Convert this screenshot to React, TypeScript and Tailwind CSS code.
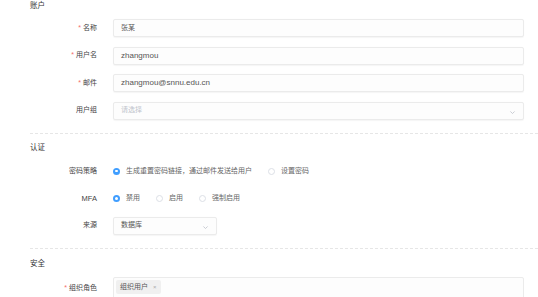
import React from 'react';

const Chevron = () => (
  <svg width="7" height="7" viewBox="0 0 10 10" className="mt-[3px]">
    <path d="M2 3.5 L5 6.5 L8 3.5" fill="none" stroke="#c0c4cc" strokeWidth="1.2" />
  </svg>
);

const Label: React.FC<{ text: React.ReactNode; required?: boolean }> = ({ text, required }) => (
  <div className="w-[97px] shrink-0 text-right text-[#444]">
    {required && <span className="text-[#f56c6c] mr-[2px]">*</span>}
    {text}
  </div>
);

const Heading: React.FC<{ text: string; className?: string }> = ({ text, className }) => (
  <div className={`pl-[30px] h-[11px] leading-[11px] text-[7.5px] text-[#333] ${className || ''}`}>{text}</div>
);

const Divider: React.FC<{ className?: string }> = ({ className }) => (
  <div className={`ml-[30px] border-t border-dashed border-[#e6e6e6] ${className || ''}`} />
);

const Radio: React.FC<{ label: string; checked?: boolean }> = ({ label, checked }) => (
  <div className="flex items-center gap-[6px]">
    {checked ? (
      <span className="w-[7px] h-[7px] rounded-full bg-[#409eff] flex items-center justify-center">
        <span className="w-[2.5px] h-[2.5px] rounded-full bg-white" />
      </span>
    ) : (
      <span className="w-[7px] h-[7px] rounded-full border border-[#dcdfe6] bg-white" />
    )}
    <span className="text-[#666]">{label}</span>
  </div>
);

const InputRow: React.FC<{ label: React.ReactNode; required?: boolean; children: React.ReactNode; className?: string }> = ({
  label,
  required,
  children,
  className,
}) => (
  <div className={`flex items-center h-[18px] ${className || ''}`}>
    <Label text={label} required={required} />
    <div className="ml-[16px] mr-[14px] flex-1 flex items-center">{children}</div>
  </div>
);

const boxCls =
  'h-[18px] border border-[#ebebeb] bg-[#fdfdfd] rounded-[2px] flex items-center px-[7px] text-[#555] shadow-[0_0.5px_1px_rgba(0,0,0,0.04)]';

export default function App() {
  return (
    <div className="w-[538px] h-[297px] overflow-hidden bg-white text-[7px] font-['Liberation_Sans','Noto_Sans_CJK_SC',sans-serif]">
      <Heading text="账户" />

      <div className="mt-[8px] flex flex-col gap-[9.5px]">
        <InputRow label="名称" required>
          <div className={`${boxCls} w-full`}>张某</div>
        </InputRow>
        <InputRow label="用户名" required>
          <div className={`${boxCls} w-full text-[8px]`}>zhangmou</div>
        </InputRow>
        <InputRow label="邮件" required>
          <div className={`${boxCls} w-full text-[8px]`}>zhangmou@snnu.edu.cn</div>
        </InputRow>
        <InputRow label="用户组">
          <div className={`${boxCls} w-full justify-between`}>
            <span className="text-[#c0c4cc]">请选择</span>
            <Chevron />
          </div>
        </InputRow>
      </div>

      <Divider className="mt-[13.5px]" />
      <Heading text="认证" className="mt-[8px]" />

      <InputRow label="密码策略" className="mt-[9px]">
        <div className="flex items-center gap-[16px]">
          <Radio label="生成重置密码链接，通过邮件发送给用户" checked />
          <Radio label="设置密码" />
        </div>
      </InputRow>
      <InputRow label={<span className="text-[7.5px]">MFA</span>} className="mt-[9.5px]">
        <div className="flex items-center gap-[16px]">
          <Radio label="禁用" checked />
          <Radio label="启用" />
          <Radio label="强制启用" />
        </div>
      </InputRow>
      <InputRow label="来源" className="mt-[9px]">
        <div className={`${boxCls} w-[104px] justify-between`}>
          <span>数据库</span>
          <Chevron />
        </div>
      </InputRow>

      <Divider className="mt-[13px]" />
      <Heading text="安全" className="mt-[9px]" />

      <div className="mt-[8.5px] flex items-start">
        <div className="w-[97px] shrink-0 text-right text-[#444] mt-[6px]">
          <span className="text-[#f56c6c] mr-[2px]">*</span>组织角色
        </div>
        <div className="ml-[16px] mr-[14px] flex-1 h-[24px] border border-[#ebebeb] bg-[#fdfdfd] rounded-[2px] px-[2px] pt-[2px]">
          <span className="inline-flex items-center h-[14px] px-[4px] gap-[5px] bg-[#f0f0f0] rounded-[2px] text-[#555]">
            组织用户<span className="text-[#aaa] text-[6px]">×</span>
          </span>
        </div>
      </div>
    </div>
  );
}
